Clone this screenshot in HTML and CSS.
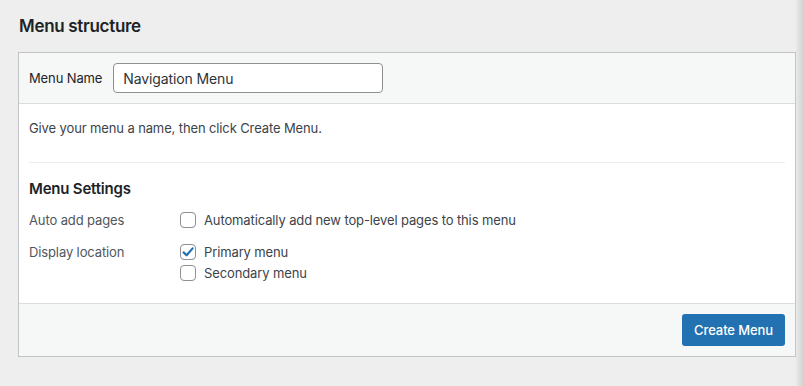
FILE: index.html
```html
<!DOCTYPE html>
<html lang="en">
<head>
  <meta charset="UTF-8" />
  <meta name="viewport" content="width=device-width, initial-scale=1.0" />
  <title>Menus</title>
  <link rel="stylesheet" href="styles.css">
</head>
<body>
  <div class="page">
    <div class="main">
      <h2 class="title">Menu structure</h2>

      <form class="menu-box">
        <div class="menu-header">
          <label class="name-label" for="menu-name">Menu Name</label>
          <input id="menu-name" class="name-input" type="text" value="Navigation Menu" />
        </div>

        <div class="menu-body">
          <p class="intro">Give your menu a name, then click Create Menu.</p>
          <div class="divider"></div>

          <h3 class="settings-title">Menu Settings</h3>
          <div class="setting-row">
            <div class="setting-label">Auto add pages</div>
            <div class="setting-options">
              <label class="check">
                <span class="box"></span>
                Automatically add new top-level pages to this menu
              </label>
            </div>
          </div>
          <div class="setting-row">
            <div class="setting-label">Display location</div>
            <div class="setting-options">
              <label class="check">
                <span class="box checked">
                  <svg width="14" height="14" viewBox="0 0 14 14"><path d="M2.6 7.4 L5.6 10.3 L11.6 3.4" fill="none" stroke="#2271b1" stroke-width="2.2" stroke-linecap="round" stroke-linejoin="round"/></svg>
                </span>
                Primary menu
              </label>
              <label class="check">
                <span class="box"></span>
                Secondary menu
              </label>
            </div>
          </div>
        </div>

        <div class="menu-footer">
          <button type="button" class="create-btn">Create Menu</button>
        </div>
      </form>
    </div>
    <div class="edge"></div>
  </div>
</body>
</html>
```

FILE: styles.css
```css
body {
  margin: 0;
  padding: 0;
  font-family: Inter, "Noto Sans", Arial, sans-serif;
  letter-spacing: -0.12px;
  background-color: #eeeeee;
  color: #1d2327;
}
.page {
  display: flex;
  height: 386px;
}
.main {
  flex: 1;
  padding-left: 18px;
}
.edge {
  width: 8px;
  background: linear-gradient(to right, rgba(0,0,0,0.02), rgba(0,0,0,0.13));
}
.title {
  font-size: 17px;
  font-weight: 600;
  line-height: 22px;
  letter-spacing: -0.3px;
  margin: 15px 0 15px 1px;
}
.menu-box {
  border: 1px solid #c3c4c7;
  background-color: #ffffff;
}
.menu-header {
  display: flex;
  align-items: center;
  gap: 11px;
  padding: 10px;
  background-color: #f6f7f7;
  border-bottom: 1px solid #dcdcde;
}
.name-label {
  font-size: 13px;
  color: #1d2327;
}
.name-input {
  width: 270px;
  height: 30px;
  box-sizing: border-box;
  padding: 0 9px;
  border: 1px solid #8c8f94;
  border-radius: 4px;
  font-family: inherit;
  font-size: 14px;
  letter-spacing: -0.12px;
  color: #2c3338;
  background: #fff;
}
.menu-body {
  padding: 0 10px 22px;
}
.intro {
  font-size: 13px;
  line-height: 18px;
  color: #3c434a;
  margin: 15px 0 25px;
}
.divider {
  height: 1px;
  background-color: #ececec;
}
.settings-title {
  font-size: 15px;
  font-weight: 600;
  line-height: 20px;
  letter-spacing: -0.2px;
  margin: 16px 0 13px;
}
.setting-row {
  display: flex;
  margin-bottom: 16px;
}
.setting-row:last-child {
  margin-bottom: 0;
}
.setting-label {
  width: 151px;
  font-size: 13px;
  line-height: 16px;
  color: #50575e;
}
.setting-options {
  display: flex;
  flex-direction: column;
  gap: 5px;
}
.check {
  display: flex;
  align-items: center;
  gap: 8px;
  font-size: 13px;
  line-height: 16px;
  color: #3c434a;
}
.box {
  width: 16px;
  height: 16px;
  box-sizing: border-box;
  border: 1px solid #8c8f94;
  border-radius: 4px;
  background: #fff;
  display: flex;
  align-items: center;
  justify-content: center;
}
.menu-footer {
  display: flex;
  justify-content: flex-end;
  padding: 10px;
  background-color: #f6f7f7;
  border-top: 1px solid #dcdcde;
}
.create-btn {
  height: 32px;
  padding: 0 12px;
  border: none;
  border-radius: 3px;
  background-color: #2271b1;
  color: #ffffff;
  font-family: inherit;
  font-size: 13px;
  font-weight: 500;
  letter-spacing: -0.1px;
}
```
